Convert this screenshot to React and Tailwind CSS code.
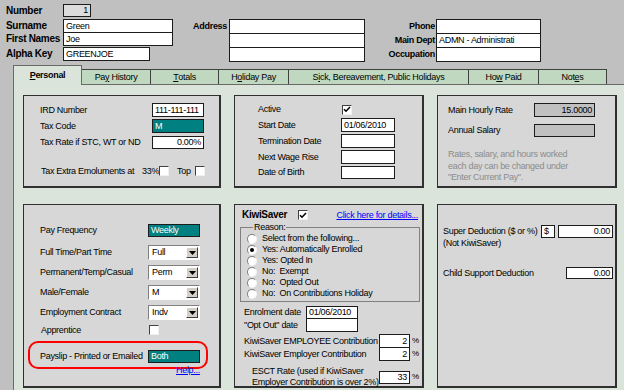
import React from 'react';

// shared bits for the old Windows-style form
const Box = ({ className = '', right, children }) => (
  <div
    className={`flex items-center bg-white border border-[#1c1c1c] px-[2px] leading-none whitespace-nowrap overflow-hidden ${right ? 'justify-end' : ''} ${className}`}
  >
    {children}
  </div>
);

const Teal = ({ children }) => (
  <div className="w-[52px] h-[13px] flex items-center bg-[#008080] text-white border border-[#1c1c1c] px-[2px] leading-none">
    {children}
  </div>
);

const Check = ({ checked, className = '' }) => (
  <div
    className={`w-[10px] h-[10px] shrink-0 bg-white border border-[#404040] border-r-[#f0f0f0] border-b-[#f0f0f0] flex items-center justify-center ${className}`}
  >
    {checked && (
      <svg width="8" height="7" viewBox="0 0 8 7">
        <path d="M1 3.2 L3 5.2 L7 1" stroke="black" strokeWidth="1.6" fill="none" />
      </svg>
    )}
  </div>
);

const Combo = ({ value }) => (
  <div className="w-[52px] h-[15px] flex items-center bg-white border border-[#808080] border-r-white border-b-white">
    <span className="flex-1 pl-[3px] leading-none">{value}</span>
    <div className="w-[12px] h-[11px] mr-[1px] bg-[#d4d0c8] border border-white border-r-[#404040] border-b-[#404040] flex items-center justify-center">
      <svg width="7" height="4" viewBox="0 0 7 4">
        <path d="M0 0H7L3.5 4Z" fill="black" />
      </svg>
    </div>
  </div>
);

const Radio = ({ on, label }) => (
  <div className="flex items-center h-[11px]">
    <div className="w-[10px] h-[10px] rounded-full bg-white border border-[#808080] border-r-[#f4f4f4] border-b-[#f4f4f4] flex items-center justify-center">
      {on && <div className="w-[4px] h-[4px] rounded-full bg-black" />}
    </div>
    <span className="ml-[5px] whitespace-pre leading-none">{label}</span>
  </div>
);

const Row = ({ label, lw, className = '', children }) => (
  <div className={`flex items-center ${className}`}>
    <span className={`${lw} shrink-0 whitespace-nowrap leading-none`}>{label}</span>
    {children}
  </div>
);

const Panel = ({ className = '', children }) => (
  <div className={`bg-[#d6d7d6] border border-[#303030] border-r-2 border-b-2 ${className}`}>{children}</div>
);

const Tab = ({ w, children }) => (
  <div className={`${w} h-[15px] bg-[#bfd8bf] border-t border-r border-[#404040] flex items-center justify-center leading-none whitespace-nowrap`}>
    {children}
  </div>
);

const HeadLabel = ({ children }) => (
  <span className="w-[57px] shrink-0 whitespace-nowrap font-bold text-[10px]">{children}</span>
);

function Header() {
  return (
    <div className="h-[65px] flex leading-none">
      <div className="w-[185px] pl-[6px] pt-[4px]">
        <div className="flex items-center h-[13px]">
          <HeadLabel>Number</HeadLabel>
          <div className="w-[28px] h-[13px] bg-[#dcdcdc] border border-[#1c1c1c] flex items-center justify-end pr-[2px]">1</div>
        </div>
        <div className="flex items-center h-[14px] mt-[2px]">
          <HeadLabel>Surname</HeadLabel>
          <Box className="w-[110px] h-[14px]">Green</Box>
        </div>
        <div className="flex items-center h-[14px] -mt-px">
          <HeadLabel>First Names</HeadLabel>
          <Box className="w-[110px] h-[14px]">Joe</Box>
        </div>
        <div className="flex items-center h-[14px] mt-px">
          <HeadLabel>Alpha Key</HeadLabel>
          <Box className="w-[87px] h-[14px]">GREENJOE</Box>
        </div>
      </div>

      <div className="flex pt-[19px]">
        <div className="w-[44px] h-[14px] pr-[2px] flex items-center justify-end font-bold">Address</div>
        <div className="w-[136px] flex flex-col">
          <Box className="h-[15px]" />
          <Box className="h-[15px] -mt-px" />
          <Box className="h-[15px] -mt-px" />
        </div>
        <div className="w-[71px] flex flex-col items-end pr-[1px] font-bold">
          <div className="h-[14px] flex items-center">Phone</div>
          <div className="h-[14px] flex items-center">Main Dept</div>
          <div className="h-[14px] flex items-center">Occupation</div>
        </div>
        <div className="w-[105px] flex flex-col">
          <Box className="h-[15px]" />
          <Box className="h-[15px] -mt-px">ADMN - Administrati</Box>
          <Box className="h-[15px] -mt-px" />
        </div>
      </div>
    </div>
  );
}

function Tabs() {
  return (
    <div className="h-[19px] flex items-end pl-[13px] relative z-10">
      <div className="w-[69px] h-[20px] -mb-px bg-[#dbe4db] border border-b-0 border-[#6a6a6a] flex items-center justify-center font-bold leading-none">
        <span>
          <u>P</u>ersonal
        </span>
      </div>
      <Tab w="w-[69px]">
        Pa<u>y</u>&nbsp;History
      </Tab>
      <Tab w="w-[68px]">
        <u>T</u>otals
      </Tab>
      <Tab w="w-[70px]">
        H<u>o</u>liday Pay
      </Tab>
      <Tab w="w-[180px]">
        S<u>i</u>ck, Bereavement, Public Holidays
      </Tab>
      <Tab w="w-[70px]">
        Ho<u>w</u>&nbsp;Paid
      </Tab>
      <Tab w="w-[68px]">
        Not<u>e</u>s
      </Tab>
    </div>
  );
}

export default function App() {
  return (
    <div className="w-[624px] h-[390px] overflow-hidden bg-[#c0c0c0] text-black text-[9px] tracking-[-0.3px] leading-[12px] font-['Liberation_Sans',Arial,sans-serif] flex flex-col">
      <Header />
      <Tabs />
      <div className="flex-1 ml-[13px] bg-[#dbe4db] border-t border-l border-[#6a6a6a] pl-[9px] pt-[10px]">
        <div className="grid grid-cols-[198px_190px_180px] grid-rows-[93px_184px] gap-x-[13px] gap-y-[16px]">
          {/* tax */}
          <Panel className="pl-[16px] pt-[7px]">
            <Row label="IRD Number" lw="w-[112px]">
              <Box className="w-[52px] h-[14px]">111-111-111</Box>
            </Row>
            <Row label="Tax Code" lw="w-[112px]" className="mt-[2px]">
              <div className="w-[52px] h-[14px] flex items-center bg-[#008080] text-white border border-[#1c1c1c] px-[2px] leading-none">M</div>
            </Row>
            <Row label="Tax Rate if STC, WT or ND" lw="w-[112px]" className="mt-[3px]">
              <Box className="w-[52px] h-[13px]" right>
                0.00%
              </Box>
            </Row>
            <div className="flex items-center mt-[17px] ml-[1px] leading-none">
              <span className="w-[101px] whitespace-nowrap">Tax Extra Emoluments at</span>
              <span className="w-[17px]">33%</span>
              <Check />
              <span className="ml-[8px] w-[18px]">Top</span>
              <Check />
            </div>
          </Panel>

          {/* dates */}
          <Panel className="pl-[23px] pt-[8px]">
            <Row label="Active" lw="w-[84px]" className="h-[11px]">
              <Check checked />
            </Row>
            <Row label="Start Date" lw="w-[83px]" className="mt-[3px]">
              <Box className="w-[54px] h-[14px]">01/06/2010</Box>
            </Row>
            <Row label="Termination Date" lw="w-[83px]" className="mt-[2px]">
              <Box className="w-[54px] h-[14px]" />
            </Row>
            <Row label="Next Wage Rise" lw="w-[83px]" className="mt-[2px]">
              <Box className="w-[54px] h-[14px]" />
            </Row>
            <Row label="Date of Birth" lw="w-[83px]" className="mt-[2px]">
              <Box className="w-[54px] h-[13px]" />
            </Row>
          </Panel>

          {/* rates */}
          <Panel className="pl-[10px] pt-[7px]">
            <Row label="Main Hourly Rate" lw="w-[86px]">
              <div className="w-[61px] h-[14px] bg-[#c0c0c0] border border-[#1c1c1c] flex items-center justify-end pr-[2px] leading-none">15.0000</div>
            </Row>
            <Row label="Annual Salary" lw="w-[86px]" className="mt-[7px]">
              <div className="w-[61px] h-[13px] bg-[#c0c0c0] border border-[#1c1c1c]" />
            </Row>
            <p className="mt-[12px] text-[#8c8c8c] leading-[11.5px]">
              Rates, salary, and hours worked
              <br />
              each day can be changed under
              <br />
              "Enter Current Pay".
            </p>
          </Panel>

          {/* employment */}
          <Panel className="pl-[16px] pt-[19px]">
            <Row label="Pay Frequency" lw="w-[108px]">
              <Teal>Weekly</Teal>
            </Row>
            <Row label="Full Time/Part Time" lw="w-[108px]" className="mt-[8px]">
              <Combo value="Full" />
            </Row>
            <Row label="Permanent/Temp/Casual" lw="w-[108px]" className="mt-[5px]">
              <Combo value="Perm" />
            </Row>
            <Row label="Male/Female" lw="w-[108px]" className="mt-[5px]">
              <Combo value="M" />
            </Row>
            <Row label="Employment Contract" lw="w-[108px]" className="mt-[5px]">
              <Combo value="Indv" />
            </Row>
            <Row label="Apprentice" lw="w-[109px] pl-[1px]" className="mt-[5px]">
              <Check />
            </Row>
            <div className="-ml-[12px] mt-[6px] w-[180px] h-[28px] border-2 border-[#ff0000] rounded-[10px] pl-[10px] pt-[2px] flex items-center">
              <span className="w-[108px] whitespace-nowrap leading-none">Payslip - Printed or Emailed</span>
              <Teal>Both</Teal>
            </div>
            <div className="relative -mt-[4px] ml-[136px] text-[#0000ff] underline leading-[11px]">Help...</div>
          </Panel>

          {/* kiwisaver */}
          <Panel className="pt-[4px]">
            <div className="h-[12px] pl-[7px] pr-[4px] flex items-center leading-none">
              <span className="font-bold text-[10px] w-[56px]">KiwiSaver</span>
              <Check checked />
              <span className="ml-auto text-[#0000ff] underline">Click here for details...</span>
            </div>
            <fieldset className="ml-[5px] w-[180px] border border-[#808080] pb-[2px] pl-[6px]">
              <legend className="ml-[6px] px-[1px] leading-[12px]">Reason:</legend>
              <Radio label="Select from the following..." />
              <Radio on label="Yes: Automatically Enrolled" />
              <Radio label="Yes: Opted In" />
              <Radio label="No:  Exempt" />
              <Radio label="No:  Opted Out" />
              <Radio label="No:  On Contributions Holiday" />
            </fieldset>
            <div className="pl-[9px] mt-[4px]">
              <Row label="Enrolment date" lw="w-[62px]">
                <Box className="w-[52px] h-[13px]">01/06/2010</Box>
              </Row>
              <Row label={'"Opt Out" date'} lw="w-[62px]" className="-mt-px">
                <Box className="w-[52px] h-[14px]" />
              </Row>
              <Row label="KiwiSaver EMPLOYEE Contribution" lw="w-[135px]" className="mt-[2px]">
                <Box className="w-[31px] h-[14px]" right>
                  2
                </Box>
                <span className="ml-[2px] text-[8px] leading-none">%</span>
              </Row>
              <Row label="KiwiSaver Employer Contribution" lw="w-[135px]" className="-mt-px">
                <Box className="w-[31px] h-[14px]" right>
                  2
                </Box>
                <span className="ml-[2px] text-[8px] leading-none">%</span>
              </Row>
              <div className="flex items-center mt-[5px]">
                <span className="ml-[8px] w-[127px] whitespace-nowrap leading-[11px]">
                  ESCT Rate (used if KiwiSaver
                  <br />
                  Employer Contribution is over 2%)
                </span>
                <Box className="w-[31px] h-[13px]" right>
                  33
                </Box>
                <span className="ml-[2px] text-[8px] leading-none">%</span>
              </div>
            </div>
          </Panel>

          {/* deductions */}
          <Panel className="pl-[5px] pt-[20px]">
            <div className="flex items-center">
              <span className="w-[98px] whitespace-nowrap leading-none">Super Deduction ($ or %)</span>
              <Box className="w-[14px] h-[13px]">$</Box>
              <Box className="ml-[3px] w-[55px] h-[13px]" right>
                0.00
              </Box>
            </div>
            <div className="mt-[1px] leading-none">(Not KiwiSaver)</div>
            <Row label="Child Support Deduction" lw="w-[123px]" className="mt-[19px]">
              <Box className="w-[47px] h-[12px]" right>
                0.00
              </Box>
            </Row>
          </Panel>
        </div>
      </div>
    </div>
  );
}
